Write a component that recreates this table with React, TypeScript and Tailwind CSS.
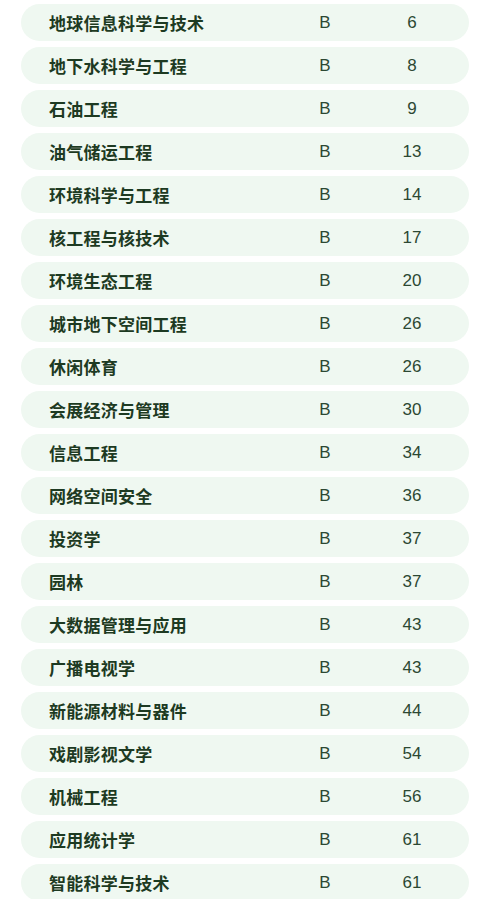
import React from "react";

const rows: [string, string, string][] = [
  ["地球信息科学与技术", "B", "6"],
  ["地下水科学与工程", "B", "8"],
  ["石油工程", "B", "9"],
  ["油气储运工程", "B", "13"],
  ["环境科学与工程", "B", "14"],
  ["核工程与核技术", "B", "17"],
  ["环境生态工程", "B", "20"],
  ["城市地下空间工程", "B", "26"],
  ["休闲体育", "B", "26"],
  ["会展经济与管理", "B", "30"],
  ["信息工程", "B", "34"],
  ["网络空间安全", "B", "36"],
  ["投资学", "B", "37"],
  ["园林", "B", "37"],
  ["大数据管理与应用", "B", "43"],
  ["广播电视学", "B", "43"],
  ["新能源材料与器件", "B", "44"],
  ["戏剧影视文学", "B", "54"],
  ["机械工程", "B", "56"],
  ["应用统计学", "B", "61"],
  ["智能科学与技术", "B", "61"],
];

export default function App() {
  return (
    <div className="w-[492px] h-[899px] overflow-hidden bg-white pt-[4px] pl-[21px] flex flex-col gap-[6px]">
      {rows.map(([name, grade, rank], i) => (
        <div
          key={i}
          className="w-[448px] h-[37px] shrink-0 rounded-full bg-[#eff8f1] flex items-center pl-[28px] pr-[17px]"
        >
          <div className="flex-1 text-[17px] tracking-[0.25px] font-bold text-[#1d3a22] leading-none font-['Noto_Sans_CJK_SC','Noto_Sans',sans-serif]">
            {name}
          </div>
          <div className="w-[94px] text-center text-[17px] text-[#2c4833] leading-none font-['Liberation_Sans',Arial,sans-serif]">
            {grade}
          </div>
          <div className="w-[80px] text-center text-[17px] text-[#2c4833] leading-none font-['Liberation_Sans',Arial,sans-serif]">
            {rank}
          </div>
        </div>
      ))}
    </div>
  );
}
